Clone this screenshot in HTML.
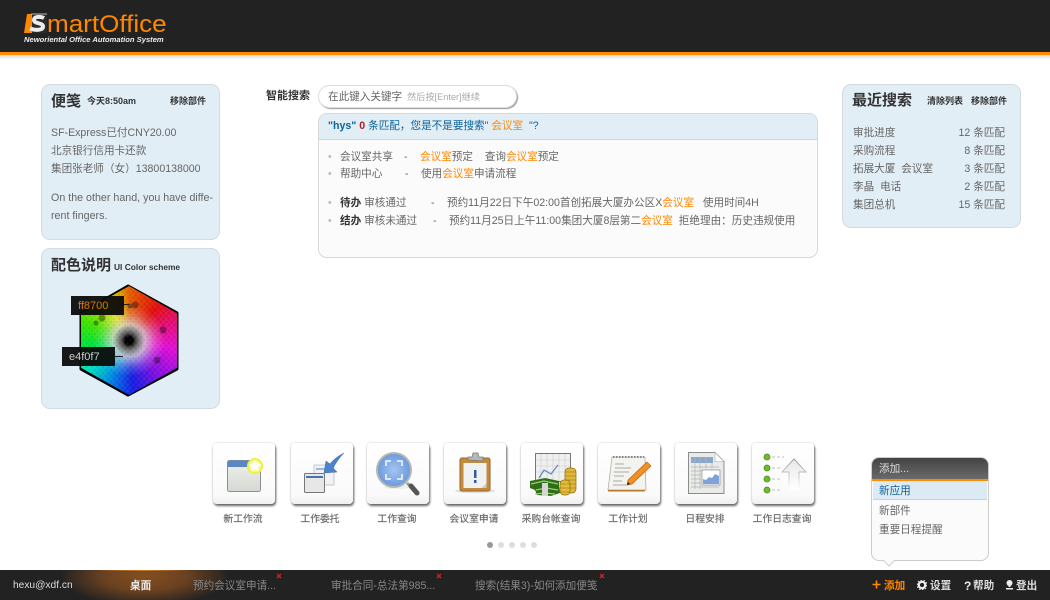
<!DOCTYPE html>
<html><head><meta charset="utf-8"><title>SmartOffice</title>
<style>
*{box-sizing:border-box}
html,body{margin:0;padding:0;width:1050px;height:600px;overflow:hidden;background:#fff}
body{position:relative;font-family:"Liberation Sans","WenQuanYi Zen Hei","Noto Sans CJK SC",sans-serif;font-size:10.6px;color:#666}
.a{position:absolute;white-space:nowrap}
.t{position:absolute;white-space:nowrap;line-height:18px;height:18px;margin-top:1px}
.o{color:#ff8700}
.panel{position:absolute;background:#e2eef6;border:1px solid #d3dbe2;border-radius:9px}
.h{font-weight:bold;color:#333}
.tile{position:absolute;top:443px;width:62px;height:61px;background:linear-gradient(#fff,#fafafa 85%,#f0f0f0);border-radius:4px;box-shadow:1px 2px 2px #666,0 0 2px #ccc}
.tile svg{position:absolute;left:0;top:0}
.lab{position:absolute;top:511px;height:18px;line-height:18px;width:90px;text-align:center;font-size:9.8px;color:#666;white-space:nowrap;-webkit-text-stroke:.15px #666}
.dot{position:absolute;top:542px;width:6px;height:6px;border-radius:50%;background:#ddd}
.r{text-align:right}
.hx{left:81px;top:286px;width:96px;height:109px;clip-path:polygon(50% 0,100% 25%,100% 75%,50% 100%,0 75%,0 25%)}
</style></head><body>

<!-- header -->
<div class="a" style="left:0;top:0;width:1050px;height:52px;background:#222"></div>
<div class="a" style="left:0;top:52px;width:1050px;height:3px;background:#ff8c00"></div>
<div class="a" style="left:0;top:55px;width:1050px;height:5px;background:linear-gradient(#d8d8d8,#fff)"></div>
<svg class="a" style="left:24px;top:12px" width="26" height="24">
<path d="M3 2h20v19H0z" fill="#ff8700"/>
<rect x="8" y="2" width="15" height="19" fill="#2b2b2b"/>
<path d="M7 2h16" stroke="#ddd" stroke-width=".8"/>
<path d="M20 6c-3-1.500-10-2-10 2 0 4 9 2.500 9 6.500 0 4-8 4-13 2" fill="none" stroke="#ececec" stroke-width="4"/>
</svg>
<div class="a" style="left:47px;top:9px;font-size:24px;line-height:32px;color:#ff8700;transform:scaleX(1.085);transform-origin:left center">martOffice</div>
<div class="a" style="left:24px;top:34px;font-size:7.600px;line-height:11px;color:#eee;font-style:italic;font-weight:bold">Neworiental Office Automation System</div>

<!-- left note -->
<div class="panel" style="left:41px;top:84px;width:179px;height:156px"></div>
<div class="t h" style="left:51px;top:92px;font-size:15px">便笺</div>
<div class="t h" style="left:87px;top:91px;font-size:9px">今天8:50am</div>
<div class="t h" style="left:170px;top:91px;font-size:9px">移除部件</div>
<div class="t" style="left:51px;top:123px">SF-Express已付CNY20.00</div>
<div class="t" style="left:51px;top:141px">北京银行信用卡还款</div>
<div class="t" style="left:51px;top:159px">集团张老师（女）13800138000</div>
<div class="t" style="left:51px;top:188px;font-size:10.700px">On the other hand, you have diffe-</div>
<div class="t" style="left:51px;top:206px;font-size:10.700px">rent fingers.</div>

<!-- color panel -->
<div class="panel" style="left:41px;top:248px;width:179px;height:161px"></div>
<div class="t h" style="left:51px;top:256px;font-size:15px">配色说明</div>
<div class="t h" style="left:114px;top:257px;font-size:8.400px">UI Color scheme</div>
<svg class="a" style="left:78px;top:283px" width="103" height="116">
<polygon points="50,3 99,30 99,86 50,112 3,86 3,30" fill="#000" stroke="#000" stroke-width="3" stroke-linejoin="round"/>
</svg>
<div class="a hx" style="background:conic-gradient(from 0deg at 50% 50%,#ff6a00 0deg,#ff1010 40deg,#ff1090 70deg,#ff10f0 100deg,#a010ff 135deg,#1820ff 175deg,#0098ff 205deg,#00ffd8 235deg,#00ff40 265deg,#50ff00 295deg,#ffff00 330deg,#ffb000 350deg,#ff6a00 360deg)"></div>
<div class="a hx" style="background:radial-gradient(circle at 50% 50%,#000 0,#000 4px,#555 7px,#999 11px,rgba(240,240,240,.8) 16px,rgba(255,255,255,.22) 27px,rgba(255,255,255,0) 36px)"></div>
<div class="a hx" style="background-image:radial-gradient(circle closest-side,rgba(255,255,255,.1) 0,rgba(255,255,255,0) 65%,rgba(0,0,0,.12) 100%),radial-gradient(circle closest-side,rgba(255,255,255,.1) 0,rgba(255,255,255,0) 65%,rgba(0,0,0,.12) 100%);background-size:5.500px 6px;background-position:0 0,2.750px 3px"></div>
<svg class="a" style="left:78px;top:283px" width="103" height="116"><g fill="#111" opacity=".4"><circle cx="57" cy="22" r="3.500"/><circle cx="24" cy="35" r="3.500"/><circle cx="85" cy="47" r="3.500"/><circle cx="79" cy="77" r="3.500"/><circle cx="52" cy="23" r="2.500"/><circle cx="18" cy="40" r="2.500"/></g></svg>
<div class="a" style="left:71px;top:296px;width:53px;height:19px;background:rgba(10,10,10,.94);color:#d87a00;line-height:20px;padding-left:7px;font-size:11px">ff8700</div>
<div class="a" style="left:124px;top:304px;width:5px;height:1px;background:#222"></div>
<div class="a" style="left:62px;top:347px;width:53px;height:19px;background:rgba(10,10,10,.94);color:#ccc;line-height:20px;padding-left:7px;font-size:11px">e4f0f7</div>
<div class="a" style="left:115px;top:356px;width:8px;height:1px;background:#222"></div>

<!-- search -->
<div class="t h" style="left:266px;top:86px;font-size:11px">智能搜索</div>
<div class="a" style="left:318px;top:85px;width:199px;height:23px;background:#fff;border:1px solid #ddd;border-radius:12px;box-shadow:1px 1px 1px #999"></div>
<div class="t" style="left:328px;top:87px">在此键入关键字</div>
<div class="t" style="left:407px;top:87px;font-size:9.200px;color:#aaa">然后按[Enter]继续</div>

<div class="a" style="left:318px;top:113px;width:500px;height:145px;background:#fbfbfb;border:1px solid #d5d9dc;border-radius:9px;overflow:hidden">
 <div style="height:26px;background:#e1eef6;border-bottom:1px solid #c9d6df"></div>
</div>
<div class="t" style="left:328px;top:116px;color:#0e6399"><b>"hys"</b> <b style="color:#b81c22">0</b> 条匹配，您是不是要搜索" <span class="o">会议室</span>&nbsp; "?</div>

<div class="t" style="left:328px;top:147px;color:#bbb">•</div>
<div class="t" style="left:340px;top:147px">会议室共享</div>
<div class="t" style="left:404px;top:147px">-</div>
<div class="t" style="left:420px;top:147px"><span class="o">会议室</span>预定&nbsp;&nbsp;&nbsp; 查询<span class="o">会议室</span>预定</div>
<div class="t" style="left:328px;top:164px;color:#bbb">•</div>
<div class="t" style="left:340px;top:164px">帮助中心</div>
<div class="t" style="left:405px;top:164px">-</div>
<div class="t" style="left:421px;top:164px">使用<span class="o">会议室</span>申请流程</div>

<div class="t" style="left:328px;top:193px;color:#bbb">•</div>
<div class="t" style="left:340px;top:193px"><b style="color:#333">待办</b> 审核通过</div>
<div class="t" style="left:431px;top:193px">-</div>
<div class="t" style="left:447px;top:193px">预约11月22日下午02:00首创拓展大厦办公区X<span class="o">会议室</span>&nbsp;&nbsp; 使用时间4H</div>
<div class="t" style="left:328px;top:211px;color:#bbb">•</div>
<div class="t" style="left:340px;top:211px"><b style="color:#333">结办</b> 审核未通过</div>
<div class="t" style="left:433px;top:211px">-</div>
<div class="t" style="left:449px;top:211px">预约11月25日上午11:00集团大厦8层第二<span class="o">会议室</span>&nbsp; 拒绝理由：历史违规使用</div>

<!-- right panel -->
<div class="panel" style="left:842px;top:84px;width:179px;height:144px"></div>
<div class="t h" style="left:852px;top:91px;font-size:15px">最近搜索</div>
<div class="t h" style="left:927px;top:91px;font-size:9px">清除列表</div>
<div class="t h" style="left:971px;top:91px;font-size:9px">移除部件</div>
<div class="t" style="left:853px;top:123px">审批进度</div><div class="t r" style="left:925px;width:80px;top:123px">12 条匹配</div>
<div class="t" style="left:853px;top:141px">采购流程</div><div class="t r" style="left:925px;width:80px;top:141px">8 条匹配</div>
<div class="t" style="left:853px;top:159px">拓展大厦&nbsp; 会议室</div><div class="t r" style="left:925px;width:80px;top:159px">3 条匹配</div>
<div class="t" style="left:853px;top:177px">李晶&nbsp; 电话</div><div class="t r" style="left:925px;width:80px;top:177px">2 条匹配</div>
<div class="t" style="left:853px;top:195px">集团总机</div><div class="t r" style="left:925px;width:80px;top:195px">15 条匹配</div>

<!-- tiles -->
<div class="tile" style="left:213px"><svg width="62" height="61">
<defs><linearGradient id="wg" x1="0" y1="0" x2="0" y2="1"><stop offset="0" stop-color="#f0f1ee"/><stop offset="1" stop-color="#d5d8d3"/></linearGradient></defs>
<rect x="14.500" y="17.500" width="33" height="31" rx="2" fill="url(#wg)" stroke="#8a8f8c"/>
<path d="M15 24v-4.500a2 2 0 0 1 2-2h28a2 2 0 0 1 2 2V24z" fill="#5b86c4"/>
<circle cx="42" cy="23" r="8" fill="#eef03a"/><circle cx="42" cy="23" r="6" fill="#f8f8a0"/>
<path d="M42 16.500l1.900 4.100 4.400.5-3.300 3 .9 4.400-3.900-2.200-3.900 2.200.9-4.400-3.300-3 4.400-.5z" fill="#fff"/>
</svg></div>
<div class="tile" style="left:290.500px"><svg width="62" height="61">
<rect x="23" y="22" width="20" height="20" fill="#f0f2f5" stroke="#c5c9cd"/>
<rect x="25" y="25" width="12" height="2" fill="#9db8d8"/>
<rect x="13.500" y="30.500" width="20" height="19" rx="1" fill="#e6e7e6" stroke="#777"/>
<rect x="15" y="33" width="17" height="2" fill="#4a72ad"/>
<path d="M53 10C47 13 42 17 39 21l-4-3-2 12 13-1-4-4c3-5 6-10 11-15z" fill="#4d82cc" stroke="#3a68ad" stroke-width=".5"/>
</svg></div>
<div class="tile" style="left:367px"><svg width="62" height="61">
<defs><radialGradient id="lg" cx=".5" cy=".5" r=".6"><stop offset="0" stop-color="#a6c4ef"/><stop offset="1" stop-color="#5f90db"/></radialGradient></defs>
<ellipse cx="30" cy="44" rx="13" ry="2" fill="#eee"/>
<path d="M40 40l4 4" stroke="#999" stroke-width="3"/>
<path d="M44 43l6 7" stroke="#555" stroke-width="5" stroke-linecap="round"/>
<circle cx="27" cy="27" r="17" fill="url(#lg)" stroke="#b5b8b0" stroke-width="2"/>
<path d="M19 23v-5h5M30 18h5v5M35 31v5h-5M24 36h-5v-5" fill="none" stroke="#e4eefb" stroke-width="1.800"/>
</svg></div>
<div class="tile" style="left:444px"><svg width="62" height="61">
<ellipse cx="31" cy="48" rx="20" ry="2" fill="#ddd"/>
<rect x="16" y="15" width="30" height="33" rx="2" fill="#c58a3c" stroke="#94652a"/>
<rect x="19.500" y="20" width="23" height="25" fill="#f0f2f2"/>
<path d="M24 17v-3h4l1-4h5l1 4h4v4z" fill="#b5b7b3" stroke="#777" stroke-width=".7"/>
<rect x="30" y="27" width="2.500" height="8" fill="#2d5fa8"/><rect x="30" y="37" width="2.500" height="3" fill="#2d5fa8"/>
<path d="M42.500 45v-5l-5 5z" fill="#ccc"/>
</svg></div>
<div class="tile" style="left:521px"><svg width="62" height="61">
<rect x="14.500" y="10.500" width="35" height="28" fill="#eef0ee" stroke="#777"/>
<path d="M20 11v27M26 11v27M32 11v27M38 11v27M44 11v27M15 17h34M15 23h34M15 29h34" stroke="#ccc" stroke-width=".6"/>
<path d="M18 35l5-8 7 4 7-9" fill="none" stroke="#5b86c4" stroke-width="1.200"/>
<path d="M9 38l15-3 14 3v5l1 7-9 3-14-1-2-5-5-2z" fill="#2f6e18"/>
<path d="M10 41l13-3 14 3M15 47l10-2 12 2M14 51l10-1 10 1" stroke="#9cd070" stroke-width="1.300" fill="none"/>
<rect x="21" y="40" width="6" height="13" fill="#d5d5d5"/>
<rect x="44" y="25" width="11" height="25" rx="4" fill="#e0b838" stroke="#8b6c10" stroke-width=".7"/>
<path d="M44 29h11M44 33h11M44 37h11M44 41h11M44 45h11" stroke="#8b6c10" stroke-width=".6"/>
<rect x="39" y="37" width="10" height="15" rx="4" fill="#e4bc38" stroke="#8b6c10" stroke-width=".7"/>
<path d="M39 41h10M39 45h10M39 49h10" stroke="#8b6c10" stroke-width=".6"/>
</svg></div>
<div class="tile" style="left:598px"><svg width="62" height="61">
<path d="M14 14h33l1 33H10z" fill="#f3f3ef" stroke="#a5a5a0" stroke-width=".7"/>
<path d="M10 47h37v1.500H10z" fill="#b57a30"/>
<path d="M15 14h31" stroke="#888" stroke-width="2" stroke-dasharray="1.500 1.500"/>
<path d="M17 21h9M17 25h16M16 29h15M16 33h10M15 38h9M15 42h13" stroke="#aaa" stroke-width="1.100"/>
<path d="M49 19l4 4-19 18-5 1 1-5z" fill="#f19024" stroke="#b96410" stroke-width=".7"/>
<path d="M29 42l1-3 2 2z" fill="#222"/>
</svg></div>
<div class="tile" style="left:675px"><svg width="62" height="61">
<path d="M13.500 9.500H40l9 9v32H13.500z" fill="#e9ebe8" stroke="#8a8d8a"/>
<path d="M40 9.500v9h9z" fill="#fff" stroke="#aaa" stroke-width=".6"/>
<rect x="16" y="14" width="22" height="6" fill="#8ba7cf"/>
<path d="M16 24h28M16 28h28M16 32h10M16 36h10M16 40h10M16 44h28M20 14v32M25 14v32M31 14v12M37 20v6" stroke="#b3b5b1" stroke-width=".7"/>
<rect x="27" y="27" width="18" height="15" fill="#fff" stroke="#889" stroke-width=".7"/>
<path d="M28 41v-5l3 1 3-3 3 1 3-4 4 2v8z" fill="#7da3d8"/>
</svg></div>
<div class="tile" style="left:752px"><svg width="62" height="61">
<defs><linearGradient id="ag" x1="0" y1="0" x2="0" y2="1"><stop offset="0" stop-color="#e8e8e8"/><stop offset="1" stop-color="#fff"/></linearGradient>
<linearGradient id="as" x1="0" y1="0" x2="0" y2="1"><stop offset="0" stop-color="#888"/><stop offset="1" stop-color="#fff"/></linearGradient></defs>
<g fill="#6fbb2c" stroke="#4a8a18" stroke-width=".8"><circle cx="15" cy="14" r="3"/><circle cx="15" cy="25" r="3"/><circle cx="15" cy="36" r="3"/><circle cx="15" cy="47" r="3"/></g>
<g stroke="#d5d5d5" stroke-width="1.500" stroke-dasharray="3 2"><path d="M20 14h12M20 25h8M20 36h9M20 47h10"/></g>
<path d="M42 16L30 29h7v18h10V29h7z" fill="url(#ag)" stroke="url(#as)" stroke-width=".9"/>
</svg></div>

<div class="lab" style="left:198px">新工作流</div>
<div class="lab" style="left:275px">工作委托</div>
<div class="lab" style="left:352px">工作查询</div>
<div class="lab" style="left:429px">会议室申请</div>
<div class="lab" style="left:506px">采购台帐查询</div>
<div class="lab" style="left:583px">工作计划</div>
<div class="lab" style="left:660px">日程安排</div>
<div class="lab" style="left:737px">工作日志查询</div>

<div class="dot" style="left:487px;background:#999"></div>
<div class="dot" style="left:498px"></div>
<div class="dot" style="left:509px"></div>
<div class="dot" style="left:520px"></div>
<div class="dot" style="left:531px"></div>

<!-- add popup -->
<div class="a" style="left:871px;top:457px;width:118px;height:104px;background:#fbfbfb;border:1px solid #ccc;border-radius:8px;overflow:hidden">
 <div style="height:21px;background:linear-gradient(#444,#6a6a6a)"></div>
 <div style="height:2px;background:#ff8c00"></div>
 <div style="margin:0 1px;height:19px;background:#dceaf3;border-bottom:1px solid #bcd3e2"></div>
</div>
<div class="a" style="left:885px;top:557px;width:8px;height:8px;background:#fbfbfb;border-right:1px solid #ccc;border-bottom:1px solid #ccc;transform:rotate(45deg)"></div>
<div class="t" style="left:879px;top:459px;color:#ddd">添加...</div>
<div class="t" style="left:879px;top:481px;color:#0e6399">新应用</div>
<div class="t" style="left:879px;top:501px">新部件</div>
<div class="t" style="left:879px;top:520px">重要日程提醒</div>

<!-- bottom bar -->
<div class="a" style="left:0;top:570px;width:1050px;height:30px;background:#222"></div>
<div class="a" style="left:60px;top:570px;width:170px;height:30px;background:radial-gradient(ellipse 85px 30px at 50% 20%,#84501f 0,#6a4120 50%,rgba(34,34,34,0) 100%)"></div>
<div class="a" style="left:95px;top:570px;width:95px;height:1px;background:linear-gradient(90deg,rgba(255,140,0,0),#c87a20,rgba(255,140,0,0))"></div>
<div class="t" style="left:13px;top:576px;color:#ddd;font-size:10.200px">hexu@xdf.cn</div>
<div class="t" style="left:130px;top:576px;color:#eee;font-weight:bold">桌面</div>
<div class="t" style="left:193px;top:576px;color:#888">预约会议室申请...</div>
<div class="t" style="left:331px;top:576px;color:#888">审批合同-总法第985...</div>
<div class="t" style="left:475px;top:576px;color:#888">搜索(结果3)-如何添加便笺</div>
<svg class="a" style="left:276px;top:573px" width="6" height="6"><path d="M1 1l4 4M5 1L1 5" stroke="#d0202a" stroke-width="1.300"/></svg>
<svg class="a" style="left:436px;top:573px" width="6" height="6"><path d="M1 1l4 4M5 1L1 5" stroke="#d0202a" stroke-width="1.300"/></svg>
<svg class="a" style="left:599px;top:573px" width="6" height="6"><path d="M1 1l4 4M5 1L1 5" stroke="#d0202a" stroke-width="1.300"/></svg>

<svg class="a" style="left:872px;top:580px" width="9" height="9"><path d="M4.500 .5v8M.5 4.500h8" stroke="#ff8700" stroke-width="1.600"/></svg>
<div class="t" style="left:884px;top:576px;color:#ff8700;font-weight:bold">添加</div>
<svg class="a" style="left:917px;top:580px" width="10" height="10"><circle cx="5" cy="5" r="3.200" fill="none" stroke="#eee" stroke-width="2.200"/><circle cx="5" cy="5" r="4.800" fill="none" stroke="#eee" stroke-width="1.200" stroke-dasharray="1.500 1.500"/></svg>
<div class="t" style="left:930px;top:576px;color:#ddd;font-weight:bold">设置</div>
<div class="t" style="left:964px;top:576px;color:#eee;font-weight:bold;font-size:12px">?</div>
<div class="t" style="left:973px;top:576px;color:#ddd;font-weight:bold">帮助</div>
<svg class="a" style="left:1005px;top:580px" width="9" height="10"><circle cx="4.500" cy="3" r="3" fill="#eee"/><path d="M3.500 5h2v2h-2zM1 8h7v1.500H1z" fill="#eee"/></svg>
<div class="t" style="left:1016px;top:576px;color:#ddd;font-weight:bold">登出</div>

</body></html>
